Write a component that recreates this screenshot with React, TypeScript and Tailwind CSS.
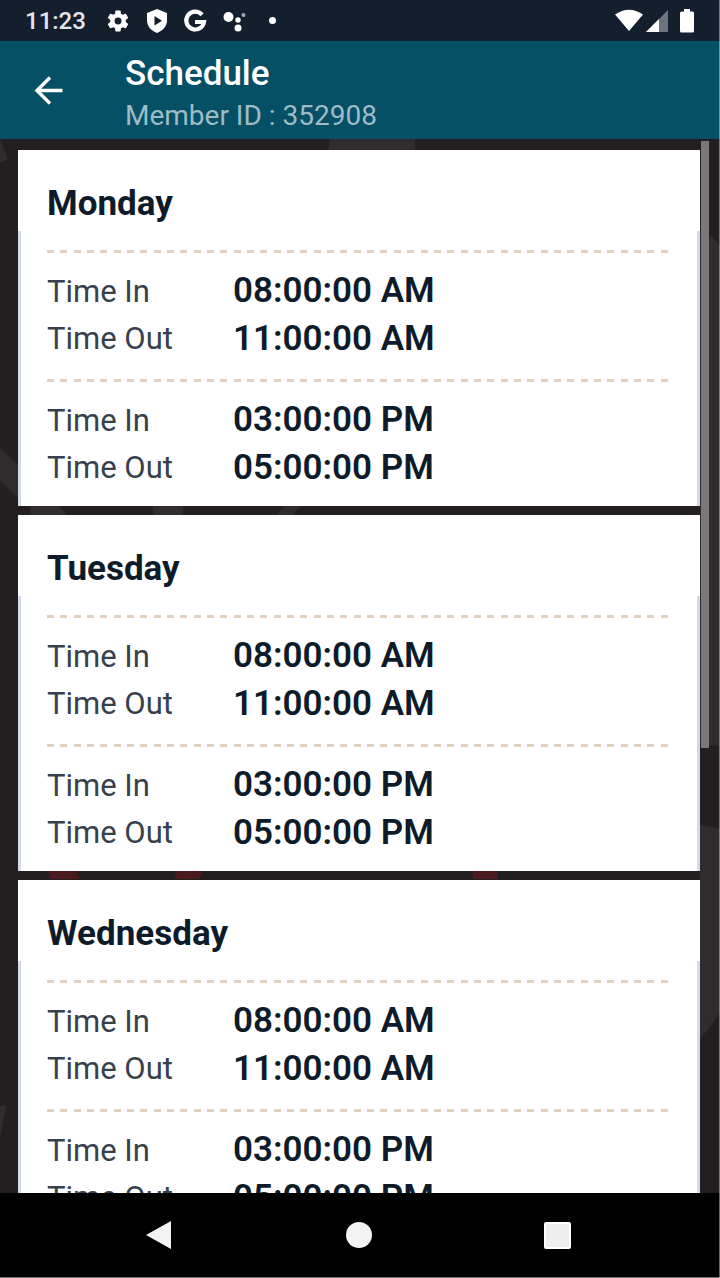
import React from 'react';

interface Slot {
    timeIn: string;
    timeOut: string;
}

interface Day {
    name: string;
    slots: Slot[];
}

const slots: Slot[] = [
    { timeIn: '08:00:00 AM', timeOut: '11:00:00 AM' },
    { timeIn: '03:00:00 PM', timeOut: '05:00:00 PM' },
];

const days: Day[] = [
    { name: 'Monday', slots },
    { name: 'Tuesday', slots },
    { name: 'Wednesday', slots },
];

const StatusBar: React.FC = () => (
    <div className="h-[41px] shrink-0 bg-[#141f2d] flex items-center pl-[25px] pr-[26px] text-white">
        <span className="w-[62px] pt-px text-[24px] font-medium leading-none whitespace-nowrap text-[#e4e6e9]">11:23</span>
        <svg className="ml-[18px] w-[26px] h-[26px]" viewBox="0 0 24 24" fill="currentColor">
            <path d="M19.14 12.94c.04-.3.06-.61.06-.94s-.02-.64-.07-.94l2.03-1.58c.18-.14.23-.41.12-.61l-1.92-3.32c-.12-.22-.37-.29-.59-.22l-2.39.96c-.5-.38-1.03-.7-1.62-.94L14.4 2.81c-.04-.24-.24-.41-.48-.41h-3.84c-.24 0-.43.17-.47.41L9.25 5.35c-.59.24-1.13.57-1.62.94l-2.39-.96c-.22-.08-.47 0-.59.22L2.74 8.87c-.12.21-.08.47.12.61l2.03 1.58c-.05.3-.09.63-.09.94s.02.64.07.94l-2.03 1.58c-.18.14-.23.41-.12.61l1.92 3.32c.12.22.37.29.59.22l2.39-.96c.5.38 1.03.7 1.62.94l.36 2.54c.05.24.24.41.48.41h3.84c.24 0 .44-.17.47-.41l.36-2.54c.59-.24 1.13-.56 1.62-.94l2.39.96c.22.08.47 0 .59-.22l1.92-3.32c.12-.22.07-.47-.12-.61l-2.01-1.58zM12 15.2A3.200 3.200 0 1 1 12 8.800a3.200 3.200 0 0 1 0 6.400z" />
        </svg>
        <svg className="ml-[13px] w-[26px] h-[26px]" viewBox="0 0 26 26" fill="currentColor">
            <path fillRule="evenodd" d="M13 1 3 5v7.500c0 5.500 4 10 10 12.500 6-2.500 10-7 10-12.500V5L13 1zM10.500 8l7.500 4.700-7.500 4.700z" />
        </svg>
        <svg className="ml-[12px] w-[26px] h-[26px]" viewBox="0 0 26 26" fill="none" stroke="currentColor" strokeWidth="4.200">
            <path d="M20 6.800A8.900 8.900 0 1 0 22 14H13" />
        </svg>
        <svg className="ml-[14px] w-[26px] h-[26px]" viewBox="0 0 26 26" fill="currentColor">
            <circle cx="6.500" cy="9" r="5" />
            <circle cx="16" cy="12" r="2.700" />
            <circle cx="16" cy="20" r="3.500" />
            <circle cx="21.500" cy="7" r="2" opacity=".6" />
        </svg>
        <span className="ml-[21px] w-[7px] h-[7px] rounded-full bg-white" />
        <svg className="ml-auto w-[28px] h-[24px]" viewBox="0 0 28 24" fill="currentColor">
            <path d="M0 5.500Q14-4 28 5.500L14 22z" />
        </svg>
        <svg className="ml-[3px] w-[22px] h-[24px]" viewBox="0 0 22 24" fill="currentColor">
            <path d="M0 23 22 1v22z" opacity=".38" />
            <path d="M0 23 13 10V23z" />
        </svg>
        <svg className="ml-[12px] w-[14px] h-[24px]" viewBox="0 0 14 24" fill="currentColor">
            <path d="M4 0h6v2.500h2.500q1.500 0 1.500 1.500v18q0 1.500-1.500 1.500h-11Q0 23.500 0 22V4q0-1.500 1.500-1.500H4z" />
        </svg>
    </div>
);

const Header: React.FC = () => (
    <div className="h-[98px] shrink-0 bg-[#055064] flex items-center pl-[34px]">
        <button className="w-[30px] h-[30px]">
            <svg viewBox="0 0 30 30" fill="none" stroke="#fff" strokeWidth="3.400">
                <path d="M28.500 15.500H3M16 2.500 3 15.500l13 13" />
            </svg>
        </button>
        <div className="ml-[61px] pt-[10px] whitespace-nowrap">
            <h1 className="text-[35px] leading-[42px] font-medium text-white">Schedule</h1>
            <p className="text-[28px] leading-[42px] text-[#9dbcc5]">Member ID : 352908</p>
        </div>
    </div>
);

const Divider: React.FC = () => (
    <div className="h-[3px] w-[621px] bg-[repeating-linear-gradient(90deg,#e2d1c1_0px,#e2d1c1_7px,transparent_7px,transparent_13.34px)]" />
);

const TimeRow: React.FC<{ label: string; value: string }> = ({ label, value }) => (
    <div className="flex items-center h-[47.500px] whitespace-nowrap">
        <span className="w-[186px] pt-[2px] text-[31px] text-[#36414d]">{label}</span>
        <span className="pt-px text-[35px] font-semibold text-[#0e1b2a]">{value}</span>
    </div>
);

const DayCard: React.FC<{ day: Day }> = ({ day }) => (
    <div className="h-[356px] shrink-0 bg-white">
        <div className="h-[81px] pl-[29px] pt-[30px]">
            <h2 className="text-[35px] leading-[48px] font-bold text-[#0e1b2a]">{day.name}</h2>
        </div>
        <div className="h-[275px] pl-[26px] pt-[19.500px] border-x-[3px] border-[#d3daeb]">
            {day.slots.map((slot, i) => (
                <div key={i} className="h-[129px]">
                    <Divider />
                    <div className="pt-[14px]">
                        <TimeRow label="Time In" value={slot.timeIn} />
                        <TimeRow label="Time Out" value={slot.timeOut} />
                    </div>
                </div>
            ))}
        </div>
    </div>
);

// Faint geometric wallpaper that shows around the cards
const Wallpaper: React.FC = () => (
    <svg className="absolute inset-0 w-full h-full" viewBox="0 0 720 1054">
        <g fill="#302b2c">
            <path d="M0 0 8 20 0 24zM330 0h85v11h-87zM0 309l18 17v33L0 341zM700 85l20 22v500l-20-2zM700 686l20 4v184l-20 27zM0 967h6L0 1000z" />
            <path d="M30 366h28l9 10H30zM153 366h30v10h-30zM286 366h16l-10 10h-16z" />
        </g>
        <g fill="#4b1a1e">
            <path d="M48 731h28l3 9H51zM178 731h25l-4 9h-25zM473 731h25v9h-25z" />
        </g>
    </svg>
);

const NavBar: React.FC = () => (
    <div className="h-[85px] shrink-0 bg-black border-b border-[#777] flex items-center">
        <svg className="ml-[145px] w-[27px] h-[30px]" viewBox="0 0 27 30" fill="#f3f3f3">
            <path d="M26 1v28L1 15z" />
        </svg>
        <span className="ml-[174px] w-[26px] h-[26px] rounded-full bg-[#f3f3f3]" />
        <span className="ml-[172px] w-[27px] h-[27px] rounded-[2px] bg-[#eee] border-2 border-white" />
    </div>
);

const App: React.FC = () => (
    <div className="relative w-[720px] h-[1278px] flex flex-col overflow-hidden bg-black font-['Roboto',sans-serif]">
        <StatusBar />
        <Header />
        <div className="relative flex-1 min-h-0 overflow-hidden bg-[#231f20]">
            <Wallpaper />
            <div className="relative flex flex-col gap-[9px] pt-[10.500px] pl-[18px] pr-[20px]">
                {days.map(day => (
                    <DayCard key={day.name} day={day} />
                ))}
            </div>
            <div className="absolute top-[2px] right-[11px] w-[8px] h-[607px] bg-[#7b7879]" />
        </div>
        <NavBar />
        <div className="absolute top-0 right-0 w-px h-full bg-white/40" />
    </div>
);

export default App;
